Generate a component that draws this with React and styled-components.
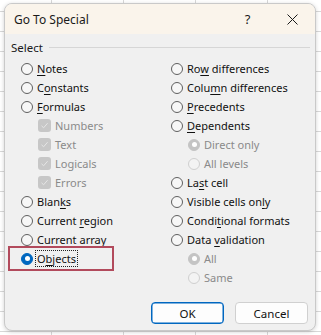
import React from "react";
import styled, { createGlobalStyle } from "styled-components";

const GlobalStyle = createGlobalStyle`
  html, body {
    margin: 0;
    padding: 0;
    height: 100%;
  }
  body {
    background-color: #ffffff;
    background-image:
      repeating-linear-gradient(to bottom, transparent 0, transparent 11px, #d8d8d8 11px, #d8d8d8 12px, transparent 12px, transparent 20px),
      repeating-linear-gradient(to right, transparent 0, transparent 51px, #d8d8d8 51px, #d8d8d8 52px, transparent 52px, transparent 72px);
    background-position: 0 0, 0 0;
    font-family: "Noto Sans", "Open Sans", sans-serif;
    overflow: hidden;
  }
`;

const Dialog = styled.div`
  margin: 3px 0 0 4px;
  width: 312px;
  height: 328px;
  box-sizing: border-box;
  background: #f0f0f0;
  border: 1px solid #c9c9c9;
  border-radius: 8px;
  box-shadow: 0 1px 4px rgba(0, 0, 0, 0.18);
  display: flex;
  flex-direction: column;
  overflow: hidden;
`;

const TitleBar = styled.div`
  height: 30px;
  background: #faf4eb;
  display: flex;
  align-items: center;
  padding-left: 9px;
`;

const Title = styled.div`
  flex: 1;
  font-size: 12px;
  color: #1a1a1a;
`;

const TitleButton = styled.div`
  width: 45px;
  height: 30px;
  display: flex;
  align-items: center;
  justify-content: center;
  font-size: 13px;
  color: #1a1a1a;
`;

const Content = styled.div`
  flex: 1;
  display: flex;
  flex-direction: column;
  padding: 4px 5px 0 6px;
`;

const Legend = styled.div`
  display: flex;
  align-items: center;
  height: 19px;
  font-size: 11.5px;
  color: #1a1a1a;
  &::after {
    content: "";
    flex: 1;
    height: 1px;
    background: #d6d6d6;
    margin-left: 6px;
  }
`;

const Columns = styled.div`
  display: grid;
  grid-template-columns: 150px 1fr;
  margin-top: 2px;
`;

const Column = styled.div`
  display: flex;
  flex-direction: column;
  padding-left: ${(p) => p.$indent}px;
`;

const Row = styled.div`
  position: relative;
  height: 19px;
  display: flex;
  align-items: center;
  padding-left: ${(p) => (p.$sub ? 17 : 0)}px;
  font-size: 11px;
  color: ${(p) => (p.$disabled ? "#8a8a8a" : "#111")};
  white-space: nowrap;
  ${(p) =>
    p.$highlight &&
    `
    &::before {
      content: "";
      position: absolute;
      left: -13px;
      top: -3px;
      width: 106px;
      height: 25px;
      box-sizing: border-box;
      border: 2px solid #b24a5c;
    }
  `}
`;

const RadioCircle = styled.span`
  width: 12px;
  height: 12px;
  box-sizing: border-box;
  border-radius: 50%;
  flex: none;
  margin-right: 4px;
  display: flex;
  align-items: center;
  justify-content: center;
  border: 1px solid
    ${(p) => (p.$checked ? (p.$disabled ? "#c4c4c4" : "#0067c0") : p.$disabled ? "#cfcfcf" : "#5f5f5f")};
  background: ${(p) =>
    p.$checked ? (p.$disabled ? "#c4c4c4" : "#0067c0") : p.$disabled ? "#f3f3f3" : "#f7f7f7"};
  &::after {
    content: "";
    display: ${(p) => (p.$checked ? "block" : "none")};
    width: 5px;
    height: 5px;
    border-radius: 50%;
    background: #fff;
  }
`;

const CheckBox = styled.span`
  width: 13px;
  height: 13px;
  box-sizing: border-box;
  border-radius: 3px;
  background: #c7c7c7;
  flex: none;
  margin-right: 4px;
  display: flex;
  align-items: center;
  justify-content: center;
`;

const Label = styled.span`
  line-height: 15px;
  padding: 0 1px;
  margin-left: -1px;
  outline: ${(p) => (p.$focus ? "1px dotted #222" : "none")};
  outline-offset: 0;
  u {
    text-decoration: underline;
    text-underline-offset: 2px;
  }
`;

const Footer = styled.div`
  display: flex;
  justify-content: flex-end;
  gap: 11px;
  padding: 0 2px 6px 0;
  margin-top: auto;
`;

const Button = styled.div`
  width: 73px;
  height: 22px;
  box-sizing: border-box;
  border-radius: 4px;
  background: #fdfdfd;
  border: 1px solid ${(p) => (p.$primary ? "#0067c0" : "#d0d0d0")};
  box-shadow: ${(p) => (p.$primary ? "inset 0 0 0 0.5px #0067c0" : "none")};
  display: flex;
  align-items: center;
  justify-content: center;
  font-size: 11.5px;
  color: #111;
`;

const Check = () => (
  <svg width="9" height="9" viewBox="0 0 9 9">
    <path d="M1.5 4.8 L3.6 6.8 L7.6 2.2" fill="none" stroke="#e6e6e6" strokeWidth="1" />
  </svg>
);

const text = (label, key) => {
  if (key == null) return label;
  return (
    <>
      {label.slice(0, key)}
      <u>{label[key]}</u>
      {label.slice(key + 1)}
    </>
  );
};

const Radio = ({ label, accel, sub, disabled, checked, highlight, focus }) => (
  <Row $sub={sub} $disabled={disabled} $highlight={highlight}>
    <RadioCircle $checked={checked} $disabled={disabled} />
    <Label $focus={focus}>{text(label, accel)}</Label>
  </Row>
);

const Checkbox = ({ label }) => (
  <Row $sub $disabled>
    <CheckBox>
      <Check />
    </CheckBox>
    <Label>{label}</Label>
  </Row>
);

export default function App() {
  return (
    <>
      <GlobalStyle />
      <Dialog>
        <TitleBar>
          <Title>Go To Special</Title>
          <TitleButton>?</TitleButton>
          <TitleButton>
            <svg width="11" height="11" viewBox="0 0 11 11">
              <path d="M0.5 0.5 L10.5 10.5 M10.5 0.5 L0.5 10.5" stroke="#1a1a1a" strokeWidth="1" />
            </svg>
          </TitleButton>
        </TitleBar>
        <Content>
          <Legend>Select</Legend>
          <Columns>
            <Column $indent={10}>
              <Radio label="Notes" accel={0} />
              <Radio label="Constants" accel={1} />
              <Radio label="Formulas" accel={0} />
              <Checkbox label="Numbers" />
              <Checkbox label="Text" />
              <Checkbox label="Logicals" />
              <Checkbox label="Errors" />
              <Radio label="Blanks" accel={4} />
              <Radio label="Current region" accel={8} />
              <Radio label="Current array" accel={8} />
              <Radio label="Objects" accel={1} checked highlight focus />
            </Column>
            <Column $indent={10}>
              <Radio label="Row differences" accel={2} />
              <Radio label="Column differences" accel={4} />
              <Radio label="Precedents" accel={0} />
              <Radio label="Dependents" accel={0} />
              <Radio label="Direct only" sub disabled checked />
              <Radio label="All levels" sub disabled />
              <Radio label="Last cell" accel={2} />
              <Radio label="Visible cells only" accel={16} />
              <Radio label="Conditional formats" accel={5} />
              <Radio label="Data validation" accel={5} />
              <Radio label="All" sub disabled checked />
              <Radio label="Same" sub disabled />
            </Column>
          </Columns>
          <Footer>
            <Button $primary>OK</Button>
            <Button>Cancel</Button>
          </Footer>
        </Content>
      </Dialog>
    </>
  );
}
